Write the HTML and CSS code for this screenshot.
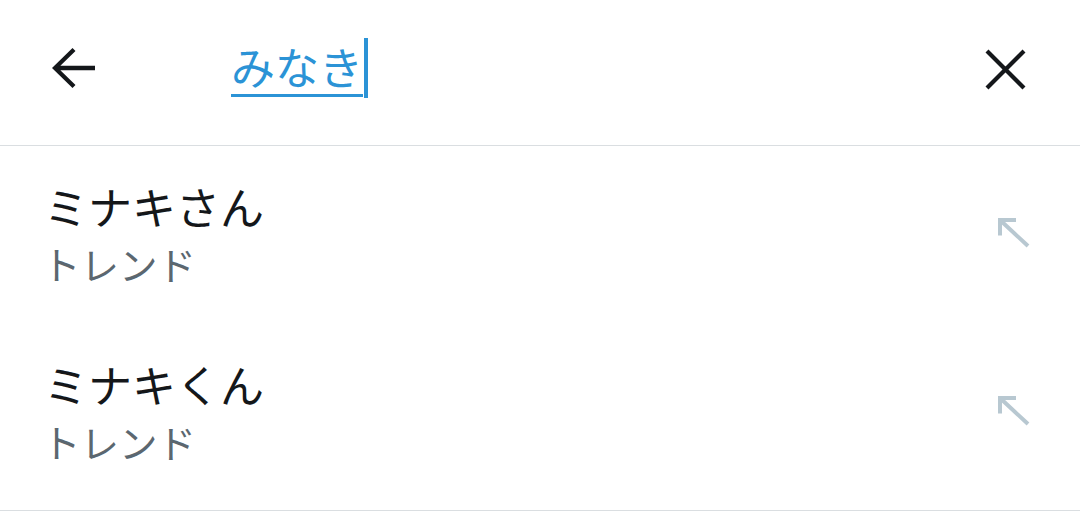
FILE: index.html
```html
<!DOCTYPE html>
<html lang="ja">
<head>
    <meta charset="UTF-8">
    <meta name="viewport" content="width=device-width, initial-scale=1.0">
    <title>検索</title>
    <link rel="stylesheet" href="styles.css">
</head>
<body>
    <div class="search-bar">
        <button class="icon-btn back-btn" aria-label="戻る">
            <svg width="44" height="44" viewBox="0 0 44 44">
                <path d="M43 21 H3 M22 2.5 L3 21 L22 39.5" fill="none" stroke="#14171a" stroke-width="4.3"/>
            </svg>
        </button>
        <div class="query">
            <span class="query-text">みなき</span><span class="caret"></span>
        </div>
        <button class="icon-btn close-btn" aria-label="クリア">
            <svg width="42" height="42" viewBox="0 0 42 42">
                <path d="M2 2 L39 39 M39 2 L2 39" fill="none" stroke="#14171a" stroke-width="4.2"/>
            </svg>
        </button>
    </div>

    <ul class="suggestions">
        <li class="suggestion">
            <div class="suggestion-text">
                <div class="title">ミナキさん</div>
                <div class="subtitle">トレンド</div>
            </div>
            <svg class="fill-arrow" width="32" height="30" viewBox="0 0 32 30">
                <path d="M2 17.5 V2 H18 M2 2 L30 28" fill="none" stroke="#b8c8d1" stroke-width="4"/>
            </svg>
        </li>
        <li class="suggestion">
            <div class="suggestion-text">
                <div class="title">ミナキくん</div>
                <div class="subtitle">トレンド</div>
            </div>
            <svg class="fill-arrow" width="32" height="30" viewBox="0 0 32 30">
                <path d="M2 17.5 V2 H18 M2 2 L30 28" fill="none" stroke="#b8c8d1" stroke-width="4"/>
            </svg>
        </li>
    </ul>
</body>
</html>
```

FILE: styles.css
```css
body {
    margin: 0;
    padding: 0;
    background-color: #fff;
    font-family: "Noto Sans CJK JP", "Noto Sans", sans-serif;
    color: #14171a;
}
.search-bar {
    height: 146px;
    box-sizing: border-box;
    border-bottom: 1px solid #dadee1;
    display: flex;
    align-items: flex-start;
    padding: 38px 53px 0 52px;
}
.icon-btn {
    border: none;
    background: none;
    padding: 0;
    cursor: pointer;
    display: flex;
}
.back-btn {
    margin-top: 9px;
}
.close-btn {
    margin-top: 11px;
    margin-left: auto;
}
.query {
    margin-left: 135px;
    display: flex;
    align-items: flex-start;
}
.query-text {
    font-size: 44px;
    line-height: 56px;
    color: #2b93d6;
    border-bottom: 3px solid #2b93d6;
}
.caret {
    width: 4px;
    height: 60px;
    margin-left: 1px;
    background-color: #2b93d6;
}
.suggestions {
    list-style: none;
    margin: 0;
    padding: 0;
}
.suggestion {
    height: 178px;
    box-sizing: border-box;
    display: flex;
    align-items: flex-start;
    padding: 31px 50px 0 44px;
}
.suggestion + .suggestion {
    height: 187px;
    border-bottom: 1px solid #dadee1;
}
.suggestion-text {
    flex: 1;
}
.title {
    font-size: 44px;
    line-height: 58px;
}
.subtitle {
    font-size: 38.5px;
    line-height: 56px;
    margin-left: -2px;
    color: #5b6770;
}
.fill-arrow {
    margin-top: 41px;
}
```
